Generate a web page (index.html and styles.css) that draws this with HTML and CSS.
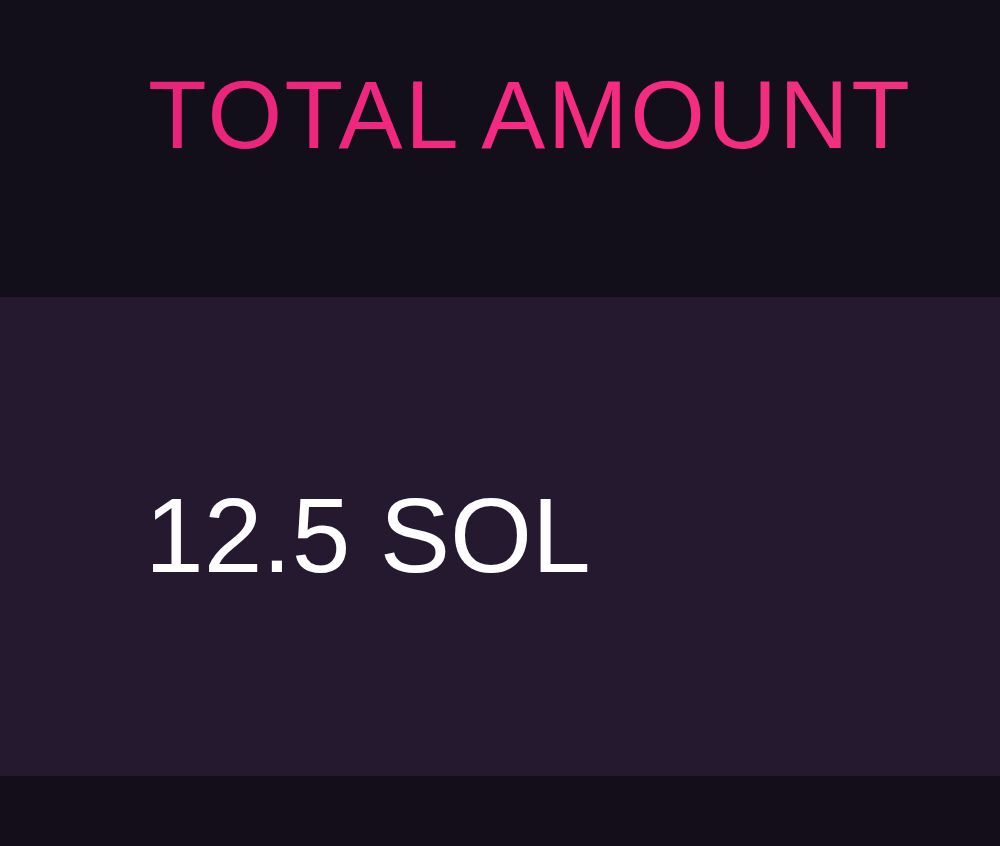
FILE: index.html
```html
<!DOCTYPE html>
<html lang="en">
<head>
<meta charset="utf-8">
<title>Total Amount</title>
<link rel="stylesheet" href="styles.css">
</head>
<body>
<div class="table">
  <div class="head">
    <span class="label">TOTAL AMOUNT</span>
  </div>
  <div class="row">
    <span class="value">12.5 SOL</span>
  </div>
</div>
</body>
</html>
```
FILE: styles.css
```css
html, body {
  margin: 0;
  padding: 0;
  background: #130e1a;
  height: 100%;
}
body {
  font-family: "Liberation Sans", Arial, sans-serif;
  overflow: hidden;
}
.table {
  display: flex;
  flex-direction: column;
}
.head {
  height: 297px;
  box-sizing: border-box;
  padding: 67px 0 0 148px;
  background: #120e1a;
}
.label {
  display: inline-block;
  font-size: 96px;
  line-height: 1;
  letter-spacing: 2.5px;
  background: linear-gradient(90deg, #e8237a 0%, #f62a82 50%, #f0307f 100%);
  -webkit-background-clip: text;
  background-clip: text;
  color: transparent;
}
.row {
  height: 479px;
  box-sizing: border-box;
  padding: 186px 0 0 145px;
  background: #25192f;
}
.value {
  display: inline-block;
  font-size: 105.5px;
  line-height: 1;
  color: #ffffff;
}
```
